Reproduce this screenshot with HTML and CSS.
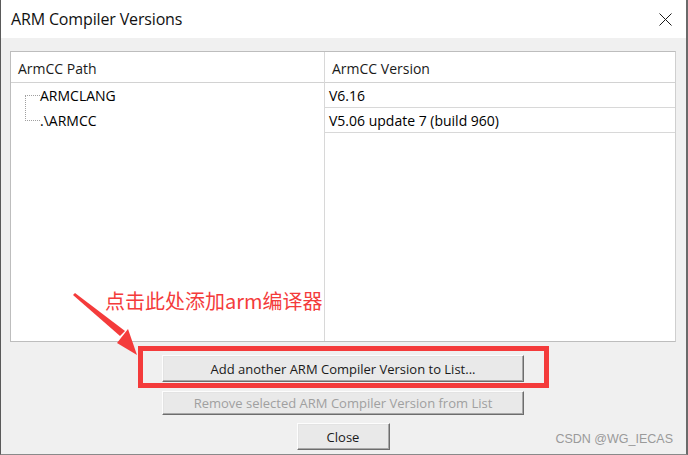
FILE: index.html
```html
<!DOCTYPE html>
<html>
<head>
<meta charset="utf-8">
<link rel="stylesheet" href="styles.css">
</head>
<body>
<div class="window">
  <div class="titlebar">
    <span class="title">ARM Compiler Versions</span>
    <svg class="close-x" width="13" height="13" viewBox="0 0 13 13">
      <path d="M0.5 0.5 L12.5 12.5 M12.5 0.5 L0.5 12.5" stroke="#1a1a1a" stroke-width="1" fill="none"/>
    </svg>
  </div>
  <div class="client">
    <div class="listbox">
      <div class="col col-path">
        <div class="hdr">ArmCC Path</div>
        <div class="tree">
          <div class="tree-line"></div>
          <div class="node"><span class="dash"></span>ARMCLANG</div>
          <div class="node"><span class="dash"></span>.\ARMCC</div>
        </div>
      </div>
      <div class="col col-ver">
        <div class="hdr">ArmCC Version</div>
        <div class="cell">V6.16</div>
        <div class="cell">V5.06 update 7 (build 960)</div>
      </div>
    </div>
    <div class="buttons">
      <button class="btn btn-wide">Add another ARM Compiler Version to List...</button>
      <button class="btn btn-wide btn-remove" disabled>Remove selected ARM Compiler Version from List</button>
      <button class="btn btn-close">Close</button>
    </div>
    <div class="watermark">CSDN @WG_IECAS</div>
  </div>
  <div class="note">点击此处添加arm编译器</div>
  <div class="redbox"></div>
  <svg class="arrow" width="80" height="70" viewBox="0 0 80 70">
    <polygon points="2,2 52,40 47,45 0,4" fill="#f43b3b"/>
    <polygon points="64,64 44,52 55,38" fill="#f43b3b"/>
  </svg>
</div>
</body>
</html>
```
FILE: styles.css
```css
* { box-sizing: border-box; }
html, body { margin: 0; padding: 0; }
body {
  width: 688px;
  height: 455px;
  overflow: hidden;
  font-family: "Open Sans", "Noto Sans", "DejaVu Sans", sans-serif;
  color: #000;
}
.window {
  position: relative;
  width: 688px;
  height: 455px;
  display: flex;
  flex-direction: column;
  border-left: 1px solid #5a5a5a;
  border-right: 2px solid #6a6a6a;
  border-bottom: 1px solid #8a8a8a;
  background: #f0f0f0;
}
.titlebar {
  height: 38px;
  background: #fff;
  display: flex;
  align-items: center;
  justify-content: space-between;
  padding: 0 14px 0 10px;
}
.title { font-size: 16px; letter-spacing: -0.15px; color: #111; }
.close-x { display: block; margin-top: 1px; }
.client {
  flex: 1;
  display: flex;
  flex-direction: column;
  padding: 13px 10px 0 9px;
  position: relative;
}
.listbox {
  height: 291px;
  background: #fff;
  border: 1px solid #bdbdbd;
  border-right-color: #cfcfcf;
  display: grid;
  grid-template-columns: 314px 1fr;
  font-size: 14px;
}
.col-path { border-right: 1px solid #d8d8d8; }
.hdr {
  height: 31px;
  border-bottom: 1px solid #d2d2d2;
  display: flex;
  align-items: center;
  padding-left: 7px;
  padding-top: 2px;
  color: #1a1a1a;
}
.tree { position: relative; padding-left: 29px; }
.tree-line {
  position: absolute;
  left: 14px;
  top: 12px;
  height: 26px;
  border-left: 1px dotted #a0a0a0;
}
.node {
  height: 25px;
  display: flex;
  align-items: center;
  position: relative;
}
.dash {
  position: absolute;
  left: -15px;
  top: 12px;
  width: 15px;
  border-top: 1px dotted #a0a0a0;
}
.cell {
  height: 25px;
  border-bottom: 1px solid #d8d8d8;
  display: flex;
  align-items: center;
  padding-left: 4px;
}
.buttons {
  display: flex;
  flex-direction: column;
  align-items: center;
  margin-top: 13px;
}
.btn {
  font-family: inherit;
  font-size: 13px;
  height: 27px;
  background: #e9e9e9;
  border: 1px solid;
  border-color: #fdfdfd #6d6d6d #6d6d6d #fdfdfd;
  box-shadow: inset -1px -1px 0 #a8a8a8, inset 1px 1px 0 #e3e3e3;
  color: #1a1a1a;
  padding: 0;
}
.btn-wide { width: 362px; }
.btn-remove { height: 24px; margin-top: 9px; }
.btn:disabled { color: #a0a0a0; }
.btn-close { width: 93px; margin-top: 8px; }
.watermark {
  position: absolute;
  right: 13px;
  bottom: 8px;
  font-family: "Liberation Sans", Arial, sans-serif;
  font-size: 12.5px;
  color: #9a9a9a;
}
.note {
  position: absolute;
  left: 104px;
  top: 287px;
  font-family: "Noto Sans CJK SC", sans-serif;
  font-size: 20px;
  color: #f43b3b;
  line-height: 28px;
}
.redbox {
  position: absolute;
  left: 137px;
  top: 346px;
  width: 411px;
  height: 42px;
  border: 5px solid #f43b3b;
}
.arrow {
  position: absolute;
  left: 72px;
  top: 291px;
}
```
